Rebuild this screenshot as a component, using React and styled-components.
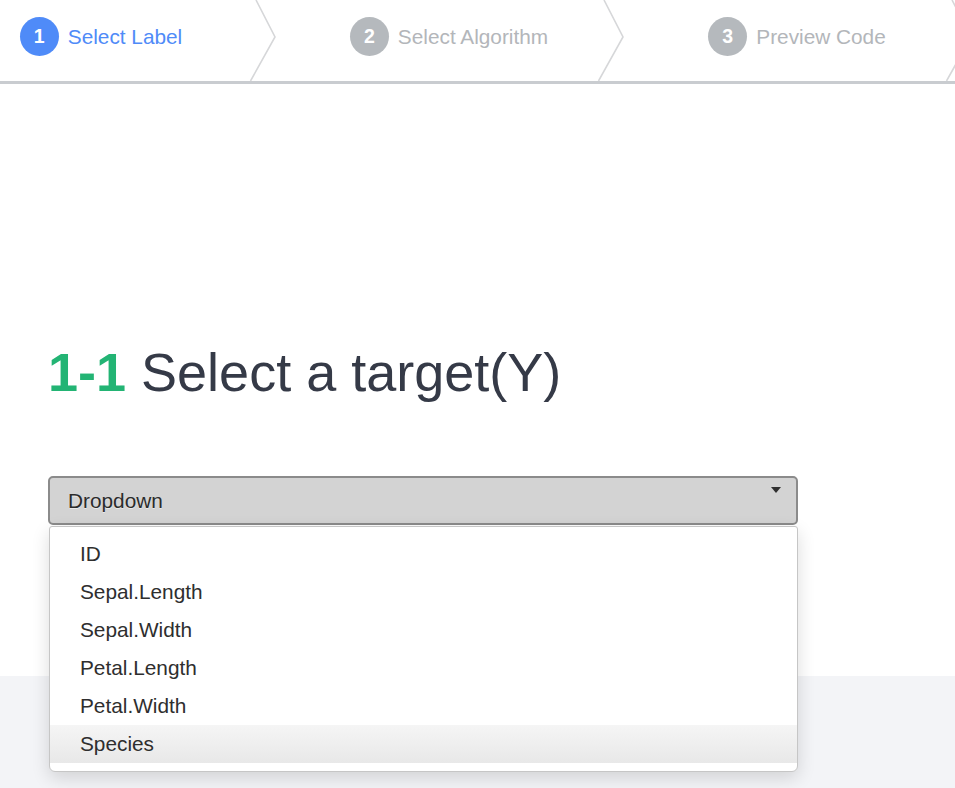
import React from "react";
import styled, { createGlobalStyle } from "styled-components";

const GlobalStyle = createGlobalStyle`
  html, body {
    margin: 0;
    padding: 0;
    background: #ffffff;
    overflow: hidden;
  }
  body {
    font-family: "Liberation Sans", Arial, sans-serif;
  }
  * { box-sizing: border-box; }
`;

const Page = styled.div`
  height: 788px;
  display: flex;
  flex-direction: column;
`;

const StepsBar = styled.nav`
  flex: none;
  height: 84px;
  border-bottom: 3px solid #c9ccd0;
  overflow: hidden;
`;

const StepTrack = styled.div`
  display: flex;
  margin-left: -73px;
  height: 81px;
`;

const Step = styled.div`
  position: relative;
  flex: none;
  width: 348px;
  height: 81px;
  display: flex;
  align-items: flex-start;
  justify-content: center;
  gap: 9px;
  padding-top: 17px;
`;

const Circle = styled.span`
  width: 39px;
  height: 39px;
  border-radius: 50%;
  background: ${(p) => (p.$active ? "#4f8bf8" : "#b5b9bd")};
  color: #ffffff;
  font-weight: 700;
  font-size: 19.5px;
  display: flex;
  align-items: center;
  justify-content: center;
`;

const StepLabel = styled.span`
  font-size: 20.8px;
  line-height: 39px;
  color: ${(p) => (p.$active ? "#4f8bf8" : "#b3b6ba")};
`;

const Chevron = styled.svg`
  position: absolute;
  right: 0;
  top: 0;
  width: 30px;
  height: 81px;
  overflow: visible;
`;

const Main = styled.main`
  flex: 1;
  padding: 257px 0 0 48px;
`;

const Heading = styled.h1`
  margin: 0;
  font-size: 54px;
  line-height: 62px;
  font-weight: 400;
  color: #353a47;
`;

const Num = styled.span`
  color: #23b474;
  font-weight: 700;
`;

const DropdownWrap = styled.div`
  position: relative;
  width: 750px;
  margin-top: 73px;
`;

const Trigger = styled.div`
  height: 49px;
  background: #d3d3d3;
  border: 2px solid #8b8b8b;
  border-radius: 5px;
  display: flex;
  align-items: center;
  justify-content: space-between;
  padding: 0 15px 0 18px;
  font-size: 20.8px;
  color: #2b2b2b;
  text-shadow: 0 1px 0 rgba(255, 255, 255, 0.5);
`;

const Caret = styled.span`
  align-self: flex-start;
  margin-top: 9px;
  width: 0;
  height: 0;
  border-left: 5px solid transparent;
  border-right: 5px solid transparent;
  border-top: 6px solid #2f2f2f;
`;

const Menu = styled.ul`
  position: absolute;
  z-index: 2;
  top: calc(100% + 1px);
  left: 1px;
  right: 0;
  margin: 0;
  padding: 8px 0;
  list-style: none;
  background: #ffffff;
  border: 1px solid #c6c6c6;
  border-radius: 3px 3px 6px 6px;
  box-shadow: 0 6px 18px rgba(0, 0, 0, 0.14);
`;

const Item = styled.li`
  height: 38px;
  display: flex;
  align-items: center;
  padding-left: 30px;
  font-size: 20.8px;
  color: #2e2e2e;
  background: ${(p) =>
    p.$selected ? "linear-gradient(#f5f5f5, #e8e8e8)" : "transparent"};
`;

const Footer = styled.footer`
  flex: none;
  height: 112px;
  background: #f3f4f7;
`;

const steps = [
  { n: 1, label: "Select Label", active: true },
  { n: 2, label: "Select Algorithm" },
  { n: 3, label: "Preview Code" },
];

const options = [
  "ID",
  "Sepal.Length",
  "Sepal.Width",
  "Petal.Length",
  "Petal.Width",
  "Species",
];

export default function App() {
  return (
    <>
      <GlobalStyle />
      <Page>
        <StepsBar>
          <StepTrack>
            {steps.map((s) => (
              <Step key={s.n}>
                <Circle $active={s.active}>{s.n}</Circle>
                <StepLabel $active={s.active}>{s.label}</StepLabel>
                <Chevron viewBox="0 0 30 81">
                  <polyline
                    points="11,0 30,37 5.5,81"
                    fill="none"
                    stroke="#d6d7d9"
                    strokeWidth="1.6"
                  />
                </Chevron>
              </Step>
            ))}
          </StepTrack>
        </StepsBar>
        <Main>
          <Heading>
            <Num>1-1</Num> Select a target(Y)
          </Heading>
          <DropdownWrap>
            <Trigger>
              <span>Dropdown</span>
              <Caret />
            </Trigger>
            <Menu>
              {options.map((o) => (
                <Item key={o} $selected={o === "Species"}>
                  {o}
                </Item>
              ))}
            </Menu>
          </DropdownWrap>
        </Main>
        <Footer />
      </Page>
    </>
  );
}
